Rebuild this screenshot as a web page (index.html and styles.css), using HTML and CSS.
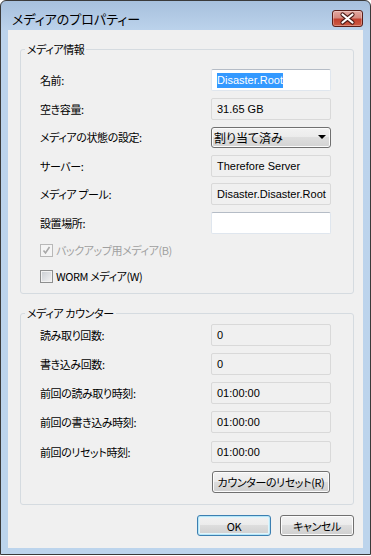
FILE: index.html
```html
<!DOCTYPE html>
<html lang="ja">
<head>
    <meta charset="UTF-8">
    <title>メディアのプロパティー</title>
    <link rel="stylesheet" href="styles.css">
</head>
<body>
    <div class="window">
        <div class="titlebar">
            <span class="title">メディアのプロパティー</span>
            <button class="close">
                <svg width="29" height="15" viewBox="0 0 29 15">
                    <path d="M9.5 3.5 L19.5 11.5 M19.5 3.5 L9.5 11.5" stroke="#4a1a16" stroke-width="4.2" stroke-linecap="round"/>
                    <path d="M9.5 3.5 L19.5 11.5 M19.5 3.5 L9.5 11.5" stroke="#fff" stroke-width="2.2" stroke-linecap="round"/>
                </svg>
            </button>
        </div>
        <div class="client">
            <fieldset class="group info">
                <legend>メディア情報</legend>
                <div class="rows">
                    <div class="row">
                        <span class="label">名前:</span>
                        <span class="field edit"><span class="sel">Disaster.Root</span></span>
                    </div>
                    <div class="row">
                        <span class="label">空き容量:</span>
                        <span class="field">31.65 GB</span>
                    </div>
                    <div class="row">
                        <span class="label">メディアの状態の設定:</span>
                        <span class="combo"><span>割り当て済み</span><span class="arrow"></span></span>
                    </div>
                    <div class="row">
                        <span class="label">サーバー:</span>
                        <span class="field">Therefore Server</span>
                    </div>
                    <div class="row">
                        <span class="label">メディア プール:</span>
                        <span class="field">Disaster.Disaster.Root</span>
                    </div>
                    <div class="row">
                        <span class="label">設置場所:</span>
                        <span class="field edit"></span>
                    </div>
                    <div class="row check-row disabled">
                        <span class="check">
                            <svg width="11" height="11" viewBox="0 0 11 11">
                                <path d="M2.5 5.5 L4.5 8 L8.5 2" fill="none" stroke="#a8a8a8" stroke-width="1.6"/>
                            </svg>
                        </span>
                        <span>バックアップ用メディア(B)</span>
                    </div>
                    <div class="row check-row">
                        <span class="check"></span>
                        <span>WORM メディア(W)</span>
                    </div>
                </div>
            </fieldset>

            <fieldset class="group counter">
                <legend>メディア カウンター</legend>
                <div class="rows">
                    <div class="row">
                        <span class="label">読み取り回数:</span>
                        <span class="field">0</span>
                    </div>
                    <div class="row">
                        <span class="label">書き込み回数:</span>
                        <span class="field">0</span>
                    </div>
                    <div class="row">
                        <span class="label">前回の読み取り時刻:</span>
                        <span class="field">01:00:00</span>
                    </div>
                    <div class="row">
                        <span class="label">前回の書き込み時刻:</span>
                        <span class="field">01:00:00</span>
                    </div>
                    <div class="row">
                        <span class="label">前回のリセット時刻:</span>
                        <span class="field">01:00:00</span>
                    </div>
                    <div class="reset-row">
                        <button class="btn reset">カウンターのリセット(R)</button>
                    </div>
                </div>
            </fieldset>

            <div class="actions">
                <button class="btn default">OK</button>
                <button class="btn">キャンセル</button>
            </div>
        </div>
    </div>
</body>
</html>
```

FILE: styles.css
```css
body {
    margin: 0;
    background: #fff;
    font-family: "Noto Sans CJK JP", sans-serif;
    font-size: 11px;
    letter-spacing: -0.4px;
    font-feature-settings: "palt";
    color: #000;
}
.window {
    width: 371px;
    height: 555px;
    box-sizing: border-box;
    border: 1px solid #3a3a3a;
    border-radius: 6px 6px 0 0;
    background: linear-gradient(#a7c0dd, #bcd3ec 30px, #bcd4ec);
    box-shadow: 0 1px 0 #3fd2e4;
    display: flex;
    flex-direction: column;
}
.titlebar {
    height: 29px;
    display: flex;
    align-items: flex-start;
    padding: 0 7px 0 11px;
}
.title {
    flex: 1;
    font-size: 13px;
    letter-spacing: 0;
    line-height: 20px;
    margin-top: 8px;
    color: #000;
}
.close {
    margin-top: 9px;
    width: 31px;
    height: 17px;
    padding: 0;
    border: 1px solid #5a1e19;
    border-radius: 3px;
    background: linear-gradient(#e4a8a1, #d58a80 45%, #c2402f 55%, #cd5c44);
    box-shadow: inset 0 0 0 1px rgba(255, 255, 255, 0.3);
    display: flex;
    align-items: center;
    justify-content: center;
}
.client {
    margin: 0 7px;
    height: 518px;
    box-sizing: border-box;
    padding-top: 12px;
    background: #f0f0f0;
}
.group {
    margin: 0 9px 0 12px;
    padding: 0;
    border: 1px solid #d5dbe0;
    border-radius: 3px;
    min-width: 0;
}
.group legend {
    margin-left: 4px;
    padding: 0 2px;
    line-height: 14px;
}
.info .rows {
    padding: 10px 0 4px 19px;
}
.counter {
    margin-top: 12px;
}
.counter .rows {
    padding: 0 0 11px 19px;
}
.row {
    display: flex;
    align-items: center;
    height: 28.5px;
}
.counter .row {
    height: 29.25px;
}
.label {
    width: 171px;
    flex-shrink: 0;
}
.field {
    width: 120px;
    height: 22px;
    box-sizing: border-box;
    border: 1px solid #d9d9d9;
    border-radius: 2px;
    background: #f0f0f0;
    padding-left: 5px;
    display: flex;
    align-items: center;
    font-family: "Liberation Sans", "Noto Sans CJK JP", sans-serif;
    font-size: 11px;
    letter-spacing: 0;
    white-space: nowrap;
    overflow: hidden;
}
.field.edit {
    background: #fff;
    border-color: #dfe6ee;
    border-top-color: #b5bcc6;
}
.sel {
    background: #3399ff;
    color: #fff;
    line-height: 15px;
}
.combo {
    width: 120px;
    height: 21px;
    box-sizing: border-box;
    border: 1px solid #707070;
    border-radius: 3px;
    background: linear-gradient(#f2f2f2, #ebebeb 50%, #dedede 50%, #d3d3d3);
    box-shadow: inset 0 0 0 1px #fbfbfb;
    display: flex;
    align-items: center;
    justify-content: space-between;
    padding: 0 3px 0 2px;
    font-size: 12px;
    letter-spacing: 0;
}
.combo .arrow {
    width: 0;
    height: 0;
    border-left: 4px solid transparent;
    border-right: 4px solid transparent;
    border-top: 4px solid #000;
    margin-right: 1px;
}
.check-row {
    height: 26px;
}
.check {
    width: 13px;
    height: 13px;
    box-sizing: border-box;
    border: 1px solid #8e8f8f;
    background: linear-gradient(135deg, #c9cdd2, #f4f4f4);
    box-shadow: inset 0 0 0 1px #f2f2f2;
    margin-right: 3px;
    display: flex;
    align-items: center;
    justify-content: center;
}
.disabled {
    color: #a0a0a0;
}
.disabled .check {
    border-color: #b8b8b8;
    background: #f4f4f4;
    box-shadow: none;
}
.reset-row {
    padding: 5px 0 0 172px;
}
.btn {
    height: 22px;
    box-sizing: border-box;
    border: 1px solid #707070;
    border-radius: 3px;
    background: linear-gradient(#f2f2f2, #ebebeb 50%, #dddddd 50%, #cfcfcf);
    box-shadow: inset 0 0 0 1px #fcfcfc;
    font: inherit;
    letter-spacing: inherit;
    color: #000;
    padding: 0;
    white-space: nowrap;
}
.reset {
    width: 118px;
}
.actions {
    display: flex;
    justify-content: flex-end;
    gap: 9px;
    margin: 10px 9px 0 0;
}
.actions .btn {
    width: 74px;
    height: 21px;
}
.actions .btn.default {
    border-color: #3c7fb1;
    box-shadow: inset 0 0 0 1px #b6e6f7, inset 0 0 0 2px #e2f4fb;
}
```
